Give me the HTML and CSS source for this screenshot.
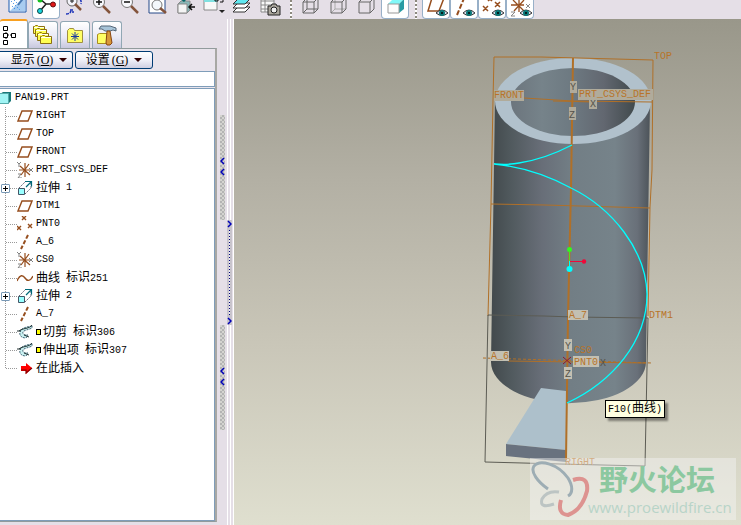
FILE: index.html
```html
<!DOCTYPE html>
<html lang="zh-CN">

<head>
    <meta charset="UTF-8">
    <meta name="viewport" content="width=device-width, initial-scale=1.0">
    <title>PAN19.PRT</title>
    <link rel="stylesheet" href="styles.css">
</head>

<body>

    <!-- shared icons -->
    <svg class="defs" width="0" height="0" aria-hidden="true">
        <symbol id="i-plane" viewBox="0 0 16 16"><path d="M5 3H15L11 13H1Z" fill="none" stroke="#964e1e" stroke-width="1.4"/></symbol>
        <symbol id="i-axis" viewBox="0 0 16 16"><path d="M11 1L4 15" fill="none" stroke="#964e1e" stroke-width="2" stroke-dasharray="4 2"/></symbol>
        <symbol id="i-point" viewBox="0 0 16 16"><path d="M5 0l4 4m0-4l-4 4M0 10l4 4m0-4l-4 4M11 8l4 4m0-4l-4 4" fill="none" stroke="#964e1e" stroke-width="1.4"/></symbol>
        <symbol id="i-csys" viewBox="0 0 16 16">
            <path d="M0 0l2 2 2-2M2 2v3M12 6l4 4m0-4l-4 4M1 12h3l-3 4h4" fill="none" stroke="#808080"/>
            <path d="M8 1v14M2 8h11M3 4l10 9M12 2L4 13" fill="none" stroke="#964e1e" stroke-width="1.2"/>
        </symbol>
        <symbol id="i-extrude" viewBox="0 0 16 16">
            <path d="M2 8L9 1M8 14l6-6M14 3v5" fill="none" stroke="#667" stroke-dasharray="2 1"/>
            <path d="M9 7l5-5M8 1.500h6.500v5" fill="none" stroke="#006878" stroke-width="1.2"/>
            <path d="M1.500 8.500h6v6h-6z" fill="#9ff" stroke="#456"/>
        </symbol>
        <symbol id="i-curve" viewBox="0 0 16 16"><path d="M0 11C3 4 6 5 8 8S13 12 16 6" fill="none" stroke="#964e1e" stroke-width="1.4"/></symbol>
        <symbol id="i-sweep" viewBox="0 0 16 16">
            <path d="M15 2C9 3 4 4 3 8c-1 4 2 6 6 6l2-3C7 11 5 10 6 8s5-2 9-4Z" fill="#c8f0f0" stroke="#467" stroke-dasharray="2 1"/>
            <path d="M15 1C13 5 5 4 2 7M0 7h4M7 11l5 2" fill="none" stroke="#233"/>
        </symbol>
        <symbol id="i-insert" viewBox="0 0 16 16"><path d="M4 6h5V3l6 5-6 6v-3H4Z" fill="#f00"/><path d="M4 10h5v3l6-5" fill="none" stroke="#800" stroke-width="1.2"/></symbol>
        <symbol id="i-eye" viewBox="0 0 12 8"><path d="M0 4Q6-2 12 4Q6 9 0 4" fill="#dde" stroke="#333"/><circle cx="6" cy="4" r="3" fill="#087878"/><circle cx="6" cy="4" r="1" fill="#000"/></symbol>
        <symbol id="i-folder" viewBox="0 0 12 9"><path d="M.5 8.500v-7h1l1-1h2l1 1h6v7z" fill="#ffff50" stroke="#8c7010"/><path d="M1 2.500h10" stroke="#fffff0"/></symbol>
    </svg>

    <div class="toolbar">
        <button class="tool" aria-label="Sketch"><svg viewBox="0 0 28 19">
            <path d="M5-6h17v18H5z" fill="#fff" stroke="#1858b0"/><path d="M6 11L21-4v15z" fill="#a8ccf0"/><path d="M7 1l9 9M10 0l4 4M8 6l4 4" stroke="#1c78e0" stroke-dasharray="1 2"/><path d="M14 5l7-9" stroke="#4878b0" stroke-width="2"/>
        </svg></button>
        <button class="tool on" aria-label="Spin center"><svg viewBox="0 0 28 19">
            <path d="M8-1l6 5-6 7M14 4h8" fill="none" stroke="#222" stroke-width="1.5"/><circle cx="8" cy="0" r="2.500" fill="#18c020"/><circle cx="8" cy="11" r="2.500" fill="#18d8e0" stroke="#144"/><circle cx="21" cy="4.500" r="2.500" fill="#e01818" stroke="#611"/>
        </svg></button>
        <button class="tool" aria-label="Orient mode"><svg viewBox="0 0 28 19">
            <circle cx="12" cy="1" r="5" fill="#f4f4fa" stroke="#666"/><path d="M12-1v4M10 1h4" stroke="#222"/><path d="M15 4l6 6" stroke="#84543c" stroke-width="2.5"/><path d="M17-3q5 2 4 7M6 14q4 0 5-3M10 10h3v3" fill="none" stroke="#1830b8" stroke-width="1.5" stroke-dasharray="3 1"/>
        </svg></button>
        <button class="tool" aria-label="Zoom in"><svg viewBox="0 0 28 19">
            <circle cx="11" cy="2" r="5.500" fill="#f8f8fc" stroke="#777"/><path d="M11-1v6M8 2h6" stroke="#111" stroke-width="1.5"/><path d="M15 6l7 7" stroke="#84543c" stroke-width="2.5"/>
        </svg></button>
        <button class="tool" aria-label="Zoom out"><svg viewBox="0 0 28 19">
            <circle cx="11" cy="2" r="5.500" fill="#f8f8fc" stroke="#777"/><path d="M8 2h6" stroke="#111" stroke-width="1.5"/><path d="M15 6l7 7" stroke="#84543c" stroke-width="2.5"/>
        </svg></button>
        <button class="tool" aria-label="Refit"><svg viewBox="0 0 28 19">
            <path d="M5-6h16v19H5z" fill="#fff" stroke="#244888"/><circle cx="13" cy="5" r="5" fill="#f4f8fc" stroke="#777"/><path d="M16 8l6 5" stroke="#84543c" stroke-width="2.5"/>
        </svg></button>
        <button class="tool" aria-label="Reorient"><svg viewBox="0 0 28 19">
            <path d="M6 4l3-3h9v9l-3 3H6z" fill="#88b8b8" stroke="#888"/><path d="M6 4h9v9H6z" fill="#f4f4f4" stroke="#888"/><path d="M8-1h7l-3 3z" fill="#066"/><path d="M17 7h6M20 4l-3 3 3 3" fill="none" stroke="#111" stroke-width="1.5"/>
        </svg></button>
        <button class="tool" aria-label="Saved views"><svg viewBox="0 0 28 19">
            <path d="M4-5h13v15H4z" fill="#f8f8f8" stroke="#888"/><path d="M4-1h13v3H4z" fill="#80e0e0"/><path d="M15-1v2h3v-3M20-1h3v3h-3" fill="none" stroke="#111"/><path d="M19 10h6l-3 3z" fill="#222"/>
        </svg></button>
        <button class="tool" aria-label="Layers"><svg viewBox="0 0 28 19">
            <g fill="#fff" stroke="#333"><path d="M5 12l5-5h12l-5 5z"/><path d="M5 8l5-5h12l-5 5z"/><path d="M5 4l5-5h12l-5 5z" fill="#60e8f0"/></g>
        </svg></button>
        <button class="tool" aria-label="View manager"><svg viewBox="0 0 28 19">
            <path d="M5-3h13v15H5zM5 1h13M5 5h13M5 9h13M9-3v15" fill="#f8f8f8" stroke="#888"/><path d="M12 6h3l1-2h4l1 2h3v9H12z" fill="#aaa69c" stroke="#222"/><circle cx="18" cy="10" r="3" fill="#eee" stroke="#222"/>
        </svg></button>
        <span class="sep"></span>
        <button class="tool" aria-label="Wireframe"><svg viewBox="0 0 28 19">
            <path d="M6 2h11v11H6zM10-2h11V9H10zM6 2l4-4M17 2l4-4M17 13l4-4M6 13l4-4" fill="none" stroke="#666"/>
        </svg></button>
        <button class="tool" aria-label="Hidden line"><svg viewBox="0 0 28 19">
            <path d="M10-2V9H21M6 13l4-4" fill="none" stroke="#aaa"/><path d="M6 2h11v11H6zM6 2l4-4h11V9l-4 4M17 2l4-4" fill="none" stroke="#666"/>
        </svg></button>
        <button class="tool" aria-label="No hidden"><svg viewBox="0 0 28 19">
            <path d="M6 2h11v11H6zM6 2l4-4h11V9l-4 4M17 2l4-4" fill="none" stroke="#666"/>
        </svg></button>
        <button class="tool on" aria-label="Shading"><svg viewBox="0 0 28 19">
            <path d="M7 4l5-5h11l-5 5z" fill="#80f8f8"/><path d="M18 4l5-5V9l-5 4z" fill="#289ca4"/><path d="M7 4h11v9H7z" fill="#fcfcfc" stroke="#999"/>
        </svg></button>
        <span class="sep"></span>
        <button class="tool on" aria-label="Datum planes"><svg viewBox="0 0 28 19">
            <path d="M10-2H22L17 11H6z" fill="none" stroke="#964e1e" stroke-width="1.5"/><use href="#i-eye" x="14" y="9" width="12" height="8"/>
        </svg></button>
        <button class="tool on" aria-label="Datum axes"><svg viewBox="0 0 28 19">
            <path d="M7 15L15-4" stroke="#964e1e" stroke-width="2" stroke-dasharray="5 2"/><use href="#i-eye" x="13" y="9" width="12" height="8"/>
        </svg></button>
        <button class="tool on" aria-label="Datum points"><svg viewBox="0 0 28 19">
            <path d="M10-3l4 4m0-4l-4 4M5 6l5 5m0-5l-5 5M17 2l5 5m0-5l-5 5" stroke="#964e1e" stroke-width="1.5"/><use href="#i-eye" x="14" y="9" width="12" height="8"/>
        </svg></button>
        <button class="tool on" aria-label="Coordinate systems"><svg viewBox="0 0 28 19">
            <path d="M13-2v14M5 5h13M7 0l11 11M18 0L8 11" stroke="#964e1e" stroke-width="1.3"/><path d="M20 4l4 4m0-4l-4 4M5 12h4l-4 4h4" fill="none" stroke="#888"/><use href="#i-eye" x="14" y="9" width="12" height="8"/>
        </svg></button>
    </div>

    <div class="main">
        <div class="navigator">
            <div class="tabs">
                <button class="tab active" aria-label="Model tree"><svg width="16" height="20" viewBox="0 0 16 20"><path d="M4 5v12M4 10h7M4 4h2M4 17h2" stroke="#111" stroke-dasharray="1 1"/><path d="M1.500 1.500h4v4h-4zM1.500 8.500h4v4h-4zM1.500 15.500h4v4h-4zM9.500 8.500h4v4h-4z" fill="#fff" stroke="#000"/></svg></button>
                <button class="tab" aria-label="Folder browser"><svg width="20" height="20" viewBox="0 0 20 20"><use href="#i-folder" x="0" y="0" width="12" height="9"/><use href="#i-folder" x="2" y="3" width="12" height="9"/><use href="#i-folder" x="4" y="7" width="12" height="9"/><use href="#i-folder" x="7" y="10" width="12" height="9"/></svg></button>
                <button class="tab" aria-label="Favorites"><svg width="20" height="20" viewBox="0 0 20 20"><path d="M2.500 17.500v-12l2-2h4l1 2h8v12z" fill="#ff6" stroke="#a09040"/><path d="M10 7v9M6 11.500h8M7 8.500l6 6M13 8.500l-6 6" stroke="#1838a0"/></svg></button>
                <button class="tab" aria-label="Connections"><svg width="22" height="22" viewBox="0 0 22 22"><path d="M1.500 19.500v-9l2-1h9v10z" fill="#ff6" stroke="#a98b20"/><path d="M5 2h9l6 2v3l-3-1-3 1H9L6 5H3z" fill="#a8c4d8" stroke="#567"/><path d="M11 7h3l2 12-2 2h-3l-1-2z" fill="#d89838" stroke="#841"/></svg></button>
            </div>
            <div class="panel">
                <div class="menus">
                    <button class="menu show">显示<span class="key">(<u>O</u>)</span><i class="arrow"></i></button>
                    <button class="menu">设置<span class="key">(<u>G</u>)</span><i class="arrow"></i></button>
                </div>
                <input class="filter" type="text" aria-label="Filter">
                <div class="tree">
                    <div class="root"><svg width="12" height="14" viewBox="0 0 12 14"><path d="M0 3L3 1h8v9l-3 3z" fill="#187878"/><path d="M-1 2.500h9.500v10H-1z" fill="#a0f4f4" stroke="#5aa"/></svg><span class="en">PAN19.PRT</span></div>
                    <ul>
                        <li><svg class="icon"><use href="#i-plane"/></svg><span class="en">RIGHT</span></li>
                        <li><svg class="icon"><use href="#i-plane"/></svg><span class="en">TOP</span></li>
                        <li><svg class="icon"><use href="#i-plane"/></svg><span class="en">FRONT</span></li>
                        <li><svg class="icon"><use href="#i-csys"/></svg><span class="en">PRT_CSYS_DEF</span></li>
                        <li><button class="expand" aria-label="Expand"></button><svg class="icon"><use href="#i-extrude"/></svg>拉伸<span class="en num">1</span></li>
                        <li><svg class="icon"><use href="#i-plane"/></svg><span class="en">DTM1</span></li>
                        <li><svg class="icon"><use href="#i-point"/></svg><span class="en">PNT0</span></li>
                        <li><svg class="icon"><use href="#i-axis"/></svg><span class="en">A_6</span></li>
                        <li><svg class="icon"><use href="#i-csys"/></svg><span class="en">CS0</span></li>
                        <li><svg class="icon"><use href="#i-curve"/></svg>曲线<span class="id">标识<span class="en">251</span></span></li>
                        <li><button class="expand" aria-label="Expand"></button><svg class="icon"><use href="#i-extrude"/></svg>拉伸<span class="en num">2</span></li>
                        <li><svg class="icon"><use href="#i-axis"/></svg><span class="en">A_7</span></li>
                        <li><svg class="icon"><use href="#i-sweep"/></svg><i class="mark"></i>切剪<span class="id">标识<span class="en">306</span></span></li>
                        <li><svg class="icon"><use href="#i-sweep"/></svg><i class="mark"></i>伸出项<span class="id">标识<span class="en">307</span></span></li>
                        <li><svg class="icon"><use href="#i-insert"/></svg>在此插入</li>
                    </ul>
                </div>
            </div>
        </div>

        <div class="splitter">
            <div class="grips">
                <div class="grip"><svg width="5" height="20" viewBox="0 0 5 20"><path d="M4 1L1 4l3 3M4 12l-3 3 3 3"/></svg></div>
                <div class="grip"><svg width="5" height="20" viewBox="0 0 5 20"><path d="M4 1L1 4l3 3M4 12l-3 3 3 3"/></svg></div>
            </div>
            <div class="rail">
                <div class="handle">
                    <svg width="5" height="8" viewBox="0 0 5 8"><path d="M1 1l3 3-3 3"/></svg>
                    <span class="dots"></span>
                    <svg width="5" height="8" viewBox="0 0 5 8"><path d="M1 1l3 3-3 3"/></svg>
                </div>
            </div>
        </div>

        <div class="view">
            <svg class="model" viewBox="234 19 507 506">
                <defs>
                    <linearGradient id="outer">
                        <stop offset="0" stop-color="#42494c"/>
                        <stop offset=".12" stop-color="#50595d"/>
                        <stop offset=".32" stop-color="#686e78"/>
                        <stop offset=".5" stop-color="#727e85"/>
                        <stop offset=".78" stop-color="#76838a"/>
                        <stop offset=".92" stop-color="#697079"/>
                        <stop offset="1" stop-color="#4c5359"/>
                    </linearGradient>
                    <linearGradient id="inner">
                        <stop offset="0" stop-color="#6c757d"/>
                        <stop offset=".25" stop-color="#76838a"/>
                        <stop offset=".5" stop-color="#6d7981"/>
                        <stop offset=".75" stop-color="#626770"/>
                        <stop offset="1" stop-color="#414a4d"/>
                    </linearGradient>
                </defs>

                <!-- cylinder -->
                <path d="M495 101L491 362A77 41 0 0 0 646 362L650 101Z" fill="url(#outer)"/>
                <ellipse cx="573" cy="101" rx="78" ry="43" fill="#b1c1cc"/>
                <ellipse cx="573" cy="102" rx="62" ry="34" fill="url(#inner)"/>

                <!-- base arm -->
                <path d="M541 388L566 391V450L506 444Z" fill="#adc0cb"/>
                <path d="M506 444L566 450V462L506 456Z" fill="#69727f"/>

                <!-- datum planes -->
                <g fill="none" stroke="#b07028">
                    <path d="M494 57L541 57 653 60 652 170 650 207 648 316M494 57L493 100 491 204 488 316"/>
                    <path d="M491 204L545 205 650 208M524 98L573 101 652 102M553 101L594 102"/>
                    <path d="M573 58L571 188 568 318 566 460" stroke-width="2"/>
                    <path d="M483 358L652 363" stroke-dasharray="3 2"/>
                    <path d="M508 361L646 363"/>
                </g>
                <g fill="none" stroke="#5c5c54">
                    <path d="M488 315L544 316 573 317 648 318 645 466 560 464 485 462 488 315"/>
                </g>

                <!-- trajectory -->
                <path d="M572 145Q545 159 519 163 510 165 494 164 534 168 571 188C612 208 646 250 647 294 647 342 612 382 567 403" fill="none" stroke="#00ffff" stroke-width="1.3"/>

                <!-- spin center -->
                <path d="M569.500 249V262" stroke="#50e020"/>
                <path d="M569.500 261V268" stroke="#00ffff"/>
                <path d="M570 261.500H584" stroke="#f00838"/>
                <circle cx="569.500" cy="249.500" r="2.500" fill="#30f820"/>
                <circle cx="584" cy="261.500" r="2.200" fill="#f00838"/>
                <circle cx="569.500" cy="269" r="3" fill="#00ffff"/>

                <!-- labels -->
                <g fill="#b0ab9b">
                    <path d="M494 90h30v11h-30zM578 89h75v11h-75zM570 81h7v12h-7zM569 107h7v13h-7zM589 99h8v10h-8z"/>
                    <path d="M568 310h20v10h-20zM490 351h19v10h-19zM564 339h8v12h-8zM564 367h8v12h-8zM573 356h26v11h-26z" fill="#c3c0b2"/>
                </g>
                <g class="axis">
                    <text x="570" y="90">Y</text>
                    <text x="569" y="118">Z</text>
                    <text x="590" y="107">X</text>
                    <text x="565" y="349">Y</text>
                    <text x="565" y="377">Z</text>
                    <text x="600" y="366">X</text>
                </g>
                <path d="M563 357l8 7M571 357l-8 7" stroke="#901830" fill="none"/>
                <g class="datum">
                    <text x="654" y="59">TOP</text>
                    <text x="494" y="98">FRONT</text>
                    <text x="579" y="97">PRT_CSYS_DEF</text>
                    <text x="569" y="318">A_7</text>
                    <text x="649" y="318">DTM1</text>
                    <text x="491" y="359">A_6</text>
                    <text x="574" y="353">CS0</text>
                    <text x="574" y="365">PNT0</text>
                    <text x="565" y="465">RIGHT</text>
                </g>
            </svg>
            <div class="tooltip" role="tooltip"><span class="en">F10(</span>曲线<span class="en">)</span></div>
            <div class="watermark">
                <svg width="60" height="60" viewBox="0 0 60 60" fill="none">
                    <path d="M18 31C8 24 0 14 4 8 10 1 28 6 38 20 43 28 43 35 38 38" stroke="#9dadb4" stroke-width="3"/>
                    <path d="M29 34Q17 32 12 41 9 51 24 46" stroke="#bcc4c3" stroke-width="3"/>
                    <path d="M43 22Q59 17 57 33 52 52 38 57 27 56 31 42" stroke="#dd9390" stroke-width="4"/>
                </svg>
                <div class="brand">
                    <div class="name">野火论坛</div>
                    <div class="site">www.proewildfire.cn</div>
                </div>
            </div>
        </div>
    </div>

</body>

</html>
```

FILE: styles.css
```css
* {
    box-sizing: border-box;
}

body {
    margin: 0;
    height: 100vh;
    display: flex;
    flex-direction: column;
    overflow: hidden;
    background: #e5dfe7;
    font-family: "Liberation Sans", "Noto Sans CJK SC", sans-serif;
    font-size: 12px;
    color: #000;
}

button {
    padding: 0;
    font: inherit;
    color: inherit;
}

ul {
    margin: 0;
    padding: 0;
    list-style: none;
}

.defs {
    position: absolute;
}

.en {
    font-family: "Liberation Mono", monospace;
    font-size: 10px;
}

/* toolbar */
.toolbar {
    display: flex;
    flex: none;
    height: 19px;
    padding-left: 4px;
    overflow: hidden;
}

.tool {
    flex: none;
    width: 28px;
    height: 19px;
    border: 1px solid transparent;
    border-top: 0;
    background: none;
}

.tool svg {
    display: block;
    width: 28px;
    height: 19px;
    margin-left: -1px;
}

.tool.on {
    background: #fff;
    border-color: #98b0c8;
    border-radius: 0 0 4px 4px;
}

.sep {
    flex: none;
    width: 13px;
    background: repeating-linear-gradient(#8c897e 0 2px, #fff 2px 4px) center / 2px 100% no-repeat;
}

.main {
    display: flex;
    flex: 1;
    min-height: 0;
}

/* navigator */
.navigator {
    display: flex;
    flex-direction: column;
    flex: none;
    width: 217px;
    padding-bottom: 3px;
}

.tabs {
    display: flex;
    align-items: flex-end;
    gap: 2px;
    height: 29px;
}

.tab {
    display: flex;
    align-items: center;
    justify-content: center;
    width: 30px;
    height: 27px;
    border: 1px solid #91a7b4;
    border-bottom: 0;
    border-radius: 3px 3px 0 0;
    background: linear-gradient(#fff, #e8e8f4 60%, #c8c8de);
}

.tab.active {
    justify-content: flex-start;
    width: 28px;
    height: 29px;
    margin-right: -2px;
    padding-left: 2px;
    border-left: 0;
    border-top: 2px solid #f8a020;
    background: #fff;
}

.panel {
    display: flex;
    flex-direction: column;
    flex: 1;
    min-height: 0;
    border: 1px solid #919b9c;
    border-left: 0;
    border-right: 2px solid #a8a8a4;
    background: #e9e4ec;
}

.menus {
    display: flex;
    gap: 2px;
    padding: 2px 0;
}

.menu {
    display: flex;
    align-items: center;
    justify-content: center;
    width: 78px;
    height: 18px;
    border: 1px solid #003c74;
    border-radius: 3px;
    background: linear-gradient(#fff, #f0f0f8 50%, #cfcfe2);
    line-height: 16px;
}

.menu.show {
    width: 73px;
    padding-left: 6px;
    border-left: 0;
    border-radius: 0 3px 3px 0;
}

.key {
    margin-left: 2px;
    font-family: "Liberation Serif", serif;
}

.arrow {
    margin-left: 6px;
    border: 4px solid transparent;
    border-top-color: #300;
    border-bottom: 0;
}

.filter {
    width: 100%;
    height: 16px;
    border: 1px solid #7f9db9;
    border-left: 0;
    background: #fff;
    font: inherit;
}

.tree {
    flex: 1;
    margin-top: 1px;
    border: 1px solid #7f9db9;
    border-left: 0;
    background: #fff;
    line-height: 18px;
}

.root,
.tree li {
    display: flex;
    align-items: center;
    height: 18px;
    white-space: nowrap;
}

.root {
    gap: 3px;
}

.tree li {
    padding-left: 17px;
    background:
        repeating-linear-gradient(#999 0 1px, transparent 1px 2px) 5px 0 / 1px 100% no-repeat,
        repeating-linear-gradient(90deg, #999 0 1px, transparent 1px 2px) 6px 9px / 11px 1px no-repeat;
}

.tree li:last-child {
    background-size: 1px 10px, 11px 1px;
}

.icon {
    flex: none;
    width: 16px;
    height: 16px;
    margin-right: 3px;
}

.expand {
    width: 9px;
    height: 9px;
    margin-left: -16px;
    margin-right: 7px;
    border: 1px solid #7898b5;
    border-radius: 1px;
    background:
        linear-gradient(#000, #000) center / 5px 1px no-repeat,
        linear-gradient(#000, #000) center / 1px 5px no-repeat,
        #fff;
}

.num,
.id {
    margin-left: 6px;
}

.mark {
    width: 5px;
    height: 6px;
    margin-right: 2px;
    border: 1px solid #000;
    background: #ff0;
}

/* splitter */
.splitter {
    display: flex;
    flex: none;
    width: 17px;
    padding-left: 3px;
    gap: 2px;
}

.splitter path {
    fill: none;
    stroke: #0000b8;
    stroke-width: 1.5;
}

.grips {
    display: flex;
    flex-direction: column;
    justify-content: center;
    gap: 105px;
    width: 5px;
}

.grip {
    display: flex;
    align-items: center;
    height: 105px;
    background: repeating-conic-gradient(#b4b4b4 0 25%, #d4d4d0 0 50%) 0 0 / 4px 4px;
}

.rail {
    display: flex;
    align-items: center;
    width: 7px;
    background: repeating-linear-gradient(90deg, #fff 0 1px, #e5dfe7 1px 3px);
}

.handle {
    display: flex;
    flex-direction: column;
    align-items: center;
    width: 5px;
    height: 105px;
    background: #c8c4cc;
}

.dots {
    flex: 1;
    width: 1px;
    margin: 2px 0;
    background: repeating-linear-gradient(#000080 0 1px, #eee 1px 3px);
}

/* graphics window */
.view {
    position: relative;
    flex: 1;
    background: linear-gradient(#99978a, #b3b0a4 32%, #c9c6b8 64%, #dfdfcf);
}

.model {
    display: block;
    width: 100%;
    height: 100%;
}

.datum,
.axis {
    font-family: "Liberation Mono", monospace;
    font-size: 10px;
    fill: #b87428;
}

.axis {
    fill: #55524a;
}

.tooltip {
    position: absolute;
    left: 371px;
    top: 381px;
    padding: 0 2px;
    border: 1px solid #000;
    background: #ffffe1;
    box-shadow: 3px 3px 2px rgba(0, 0, 0, 0.4);
    line-height: 15px;
    white-space: nowrap;
}

.watermark {
    position: absolute;
    right: 5px;
    bottom: 5px;
    display: flex;
    width: 206px;
    height: 62px;
    background: rgba(244, 244, 244, 0.45);
}

.watermark svg {
    flex: none;
    margin-right: -2px;
}

.name {
    padding-left: 11px;
    font-family: "Noto Sans CJK SC", sans-serif;
    font-size: 29px;
    font-weight: bold;
    line-height: 40px;
    color: #8cc8a0;
    white-space: nowrap;
}

.site {
    font-family: "Open Sans", sans-serif;
    font-size: 15px;
    line-height: 18px;
    color: #b8d4c8;
}
```
